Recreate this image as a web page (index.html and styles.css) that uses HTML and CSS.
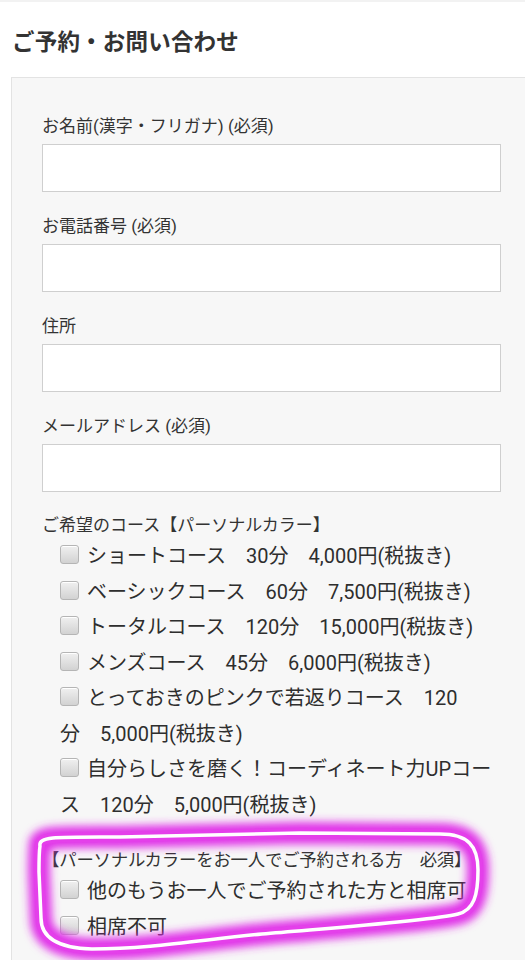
FILE: index.html
```html
<!DOCTYPE html>
<html lang="ja">
<head>
<meta charset="utf-8">
<title>ご予約・お問い合わせ</title>
<link rel="stylesheet" href="styles.css">
</head>
<body>
<div class="page">
  <h1 class="title">ご予約・お問い合わせ</h1>
  <form class="card">
    <div class="field">
      <label class="label">お名前(漢字・フリガナ) (必須)</label>
      <div class="input"></div>
    </div>
    <div class="field">
      <label class="label">お電話番号 (必須)</label>
      <div class="input"></div>
    </div>
    <div class="field">
      <label class="label">住所</label>
      <div class="input"></div>
    </div>
    <div class="field">
      <label class="label">メールアドレス (必須)</label>
      <div class="input"></div>
    </div>
    <div class="group">
      <div class="label">ご希望のコース【パーソナルカラー】</div>
      <ul class="checks">
        <li><span class="box"></span>ショートコース　30分　4,000円(税抜き)</li>
        <li><span class="box"></span>ベーシックコース　60分　7,500円(税抜き)</li>
        <li><span class="box"></span>トータルコース　120分　15,000円(税抜き)</li>
        <li><span class="box"></span>メンズコース　45分　6,000円(税抜き)</li>
        <li><span class="box"></span>とっておきのピンクで若返りコース　120<br>分　5,000円(税抜き)</li>
        <li><span class="box"></span>自分らしさを磨く！コーディネート力UPコー<br>ス　120分　5,000円(税抜き)</li>
      </ul>
    </div>
    <div class="group group-single">
      <div class="label">【パーソナルカラーをお一人でご予約される方　必須】</div>
      <ul class="checks">
        <li><span class="box"></span>他のもうお一人でご予約された方と相席可</li>
        <li><span class="box"></span>相席不可</li>
      </ul>
    </div>
  </form>
  <svg class="marker" width="525" height="960" viewBox="0 0 525 960" aria-hidden="true">
    <defs>
      <filter id="glow" x="-10%" y="-30%" width="120%" height="160%">
        <feGaussianBlur stdDeviation="4"/>
      </filter>
      <path id="loop" d="M40 846 C38 836 58 837 120 837 L300 833 L440 834 C468 834 478 846 478 870 C478 895 474 910 458 914 C430 921 330 928 262 934 C200 940 150 949 92 949 C56 948 41 936 41 918 L39 872 C39 860 39 852 40 846 Z" fill="none"/>
    </defs>
    <use href="#loop" stroke="#e030e8" stroke-width="22" filter="url(#glow)"/>
    <use href="#loop" stroke="#e440ea" stroke-width="10" opacity="0.9"/>
    <use href="#loop" stroke="#ffffff" stroke-width="3.5" stroke-linejoin="round"/>
  </svg>
</div>
</body>
</html>
```

FILE: styles.css
```css
html, body {
  margin: 0;
  padding: 0;
  background: #ffffff;
  overflow: hidden;
}

.page {
  position: relative;
  display: flex;
  flex-direction: column;
  width: 525px;
  height: 960px;
  overflow: hidden;
  font-family: Roboto, "Noto Sans CJK JP", sans-serif;
  color: #333333;
  border-top: 2px solid #f2f2f2;
  box-sizing: border-box;
}

.title {
  margin: 0;
  padding: 24px 0 0 12px;
  font-size: 22.5px;
  line-height: 32px;
  font-weight: 700;
  color: #333333;
  letter-spacing: 0.2px;
}

.card {
  flex: 1;
  display: block;
  margin: 19px 0 0 11px;
  padding: 35px 24px 0 30px;
  background: #f7f7f7;
  border: 1px solid #e3e3e3;
  border-right: none;
  border-bottom: none;
}

.field {
  display: flex;
  flex-direction: column;
  margin-bottom: 21px;
}

.label {
  display: block;
  font-size: 17px;
  line-height: 26px;
  color: #333333;
}

.field .label {
  margin-bottom: 5px;
}

.input {
  height: 48px;
  box-sizing: border-box;
  background: #ffffff;
  border: 1px solid #cfcfcf;
}

.group {
  margin-top: -1px;
}

.group-single {
  margin-top: 24px;
}

.group-single .label {
  font-size: 17.4px;
  letter-spacing: -0.2px;
}

.checks {
  list-style: none;
  margin: 1px 0 0;
  padding: 0 0 0 18px;
  font-size: 20px;
  line-height: 35.5px;
  color: #2e2e2e;
}

.checks li {
  margin: 0;
}

.box {
  display: inline-block;
  width: 19px;
  height: 19px;
  box-sizing: border-box;
  margin-right: 8px;
  vertical-align: -1px;
  border: 1px solid #b5b5b5;
  border-radius: 3px;
  background: linear-gradient(#f0f0f0, #d2d2d2);
  box-shadow: inset 0 1px 0 #ffffff;
}

.marker {
  position: absolute;
  left: 0;
  top: -2px;
  pointer-events: none;
}
```
